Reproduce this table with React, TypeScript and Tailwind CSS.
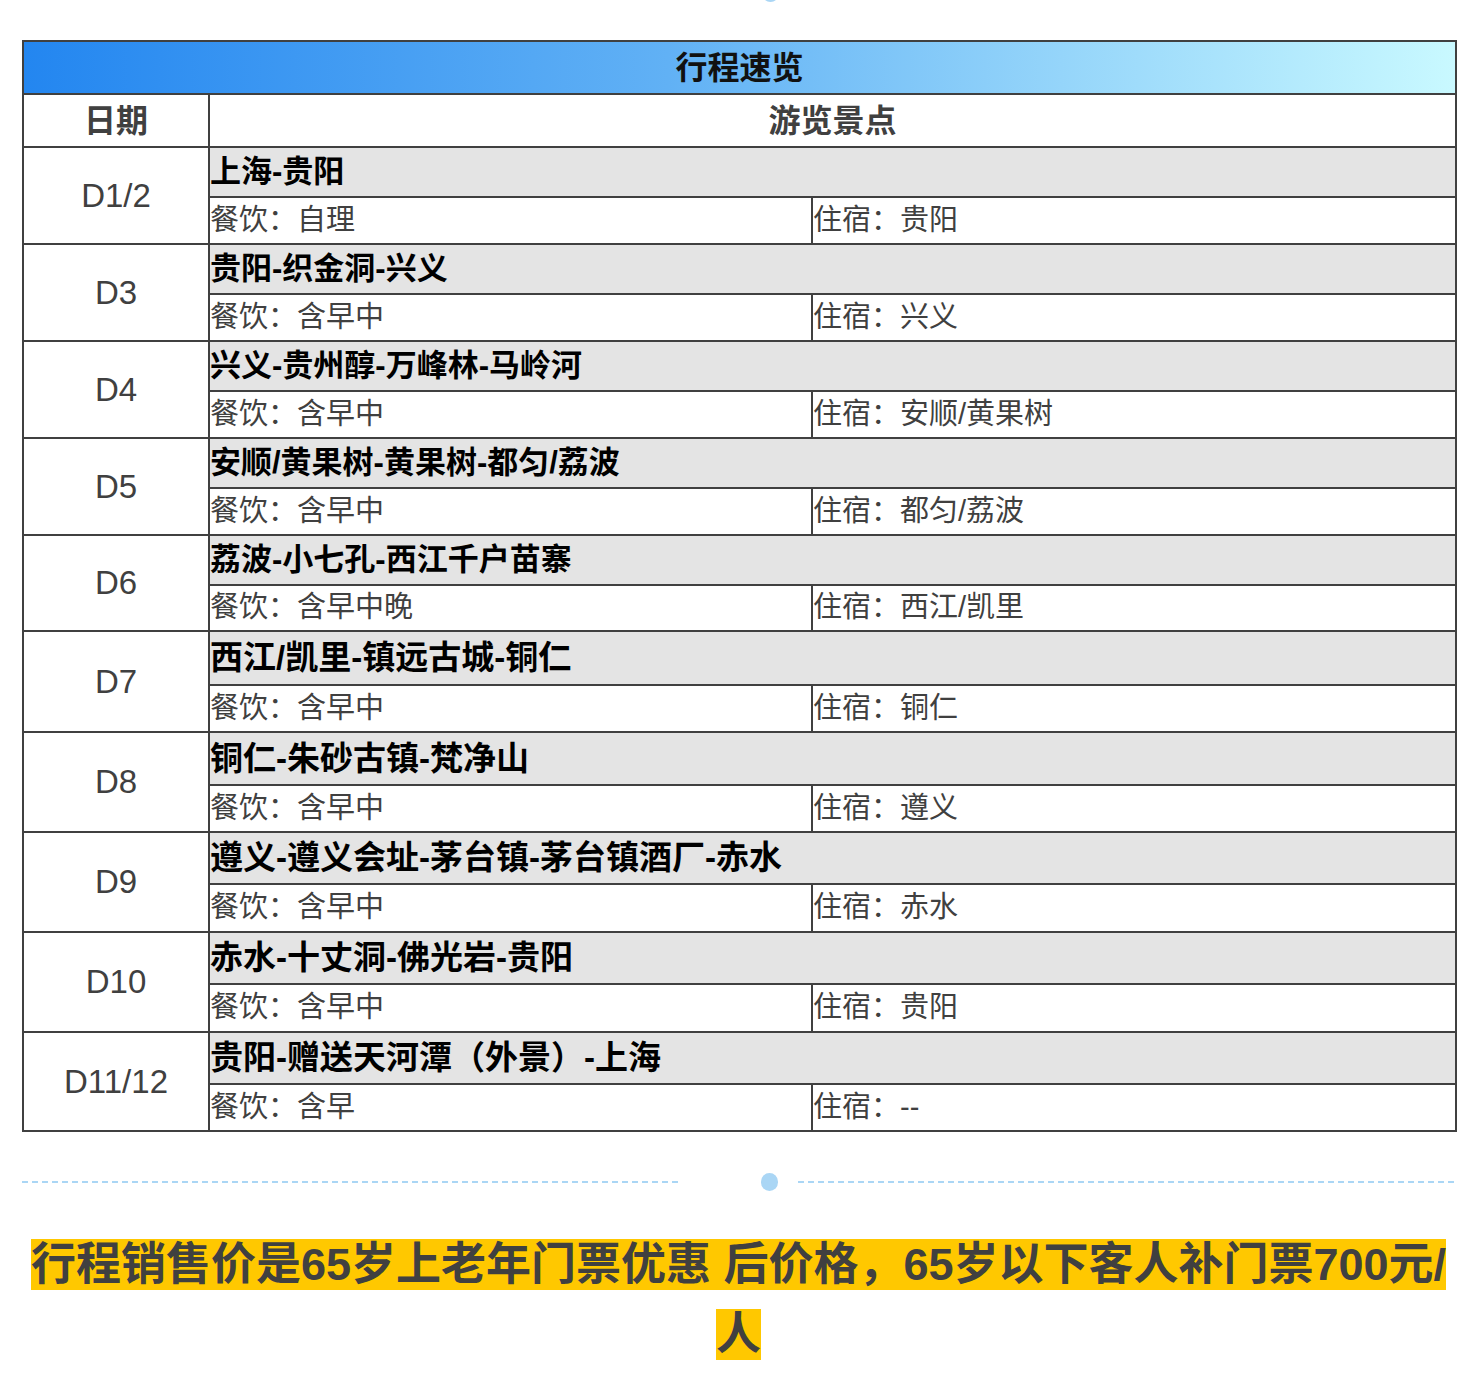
import React from 'react';

type Day = {
  day: string;
  route: string;
  meal: string;
  stay: string;
  titleH: string;
  detailH: string;
  titleSize: string;
};

// 行程数据（后半段标题字号略大）
const days: Day[] = [
  { day: 'D1/2', route: '上海-贵阳', meal: '自理', stay: '贵阳', titleH: 'h-[50px]', detailH: 'h-[47px]', titleSize: 'text-[31px]' },
  { day: 'D3', route: '贵阳-织金洞-兴义', meal: '含早中', stay: '兴义', titleH: 'h-[50px]', detailH: 'h-[47px]', titleSize: 'text-[31px]' },
  { day: 'D4', route: '兴义-贵州醇-万峰林-马岭河', meal: '含早中', stay: '安顺/黄果树', titleH: 'h-[50px]', detailH: 'h-[47px]', titleSize: 'text-[31px]' },
  { day: 'D5', route: '安顺/黄果树-黄果树-都匀/荔波', meal: '含早中', stay: '都匀/荔波', titleH: 'h-[50px]', detailH: 'h-[47px]', titleSize: 'text-[31px]' },
  { day: 'D6', route: '荔波-小七孔-西江千户苗寨', meal: '含早中晚', stay: '西江/凯里', titleH: 'h-[50px]', detailH: 'h-[46px]', titleSize: 'text-[31px]' },
  { day: 'D7', route: '西江/凯里-镇远古城-铜仁', meal: '含早中', stay: '铜仁', titleH: 'h-[54px]', detailH: 'h-[47px]', titleSize: 'text-[33px]' },
  { day: 'D8', route: '铜仁-朱砂古镇-梵净山', meal: '含早中', stay: '遵义', titleH: 'h-[53px]', detailH: 'h-[47px]', titleSize: 'text-[33px]' },
  { day: 'D9', route: '遵义-遵义会址-茅台镇-茅台镇酒厂-赤水', meal: '含早中', stay: '赤水', titleH: 'h-[52px]', detailH: 'h-[48px]', titleSize: 'text-[33px]' },
  { day: 'D10', route: '赤水-十丈洞-佛光岩-贵阳', meal: '含早中', stay: '贵阳', titleH: 'h-[52px]', detailH: 'h-[48px]', titleSize: 'text-[33px]' },
  { day: 'D11/12', route: '贵阳-赠送天河潭（外景）-上海', meal: '含早', stay: '--', titleH: 'h-[52px]', detailH: 'h-[47px]', titleSize: 'text-[33px]' },
];

const cell = 'border-2 border-[#404040] p-0';

function Divider() {
  return (
    <div className="flex items-center px-[22px]">
      <div className="h-[2px] flex-1 bg-[repeating-linear-gradient(90deg,#aad6f5_0_6px,transparent_6px_10px)]" />
      <div className="ml-[82px] mr-[20px] h-[18px] w-[17px] rounded-full bg-[#aad6f5]" />
      <div className="h-[2px] flex-1 bg-[repeating-linear-gradient(90deg,#aad6f5_0_6px,transparent_6px_10px)]" />
    </div>
  );
}

export default function App() {
  return (
    <div className="w-[1477px] min-h-[1379px] bg-white font-['Liberation_Sans','Noto_Sans_CJK_SC',sans-serif]">
      {/* 上一段分隔线的圆点尾巴 */}
      <div className="h-[2px] overflow-hidden pl-[762px]">
        <div className="-mt-[16px] h-[18px] w-[17px] rounded-full bg-[#aad6f5]" />
      </div>

      <div className="mt-[38px] pl-[22px]">
        <table className="w-[1433px] table-fixed border-collapse">
          <colgroup>
            <col className="w-[186px]" />
            <col className="w-[603px]" />
            <col className="w-[644px]" />
          </colgroup>
          <tbody>
            <tr>
              <td
                colSpan={3}
                className={`${cell} h-[53px] bg-[linear-gradient(90deg,#2386f0_0%,#61b1f5_45%,#c9f9ff_100%)] text-center text-[32px] font-bold text-[#111]`}
              >
                行程速览
              </td>
            </tr>
            <tr>
              <td className={`${cell} h-[53px] text-center text-[32px] font-bold text-[#404040]`}>日期</td>
              <td colSpan={2} className={`${cell} text-center text-[32px] font-bold text-[#404040]`}>
                游览景点
              </td>
            </tr>
            {days.map((d) => (
              <React.Fragment key={d.day}>
                <tr>
                  <td rowSpan={2} className={`${cell} text-center text-[33px] text-[#404040]`}>
                    {d.day}
                  </td>
                  <td colSpan={2} className={`${cell} ${d.titleH} ${d.titleSize} bg-[#e4e4e4] font-bold text-black`}>
                    {d.route}
                  </td>
                </tr>
                <tr>
                  <td className={`${cell} ${d.detailH} text-[29px] text-[#404040]`}>餐饮：{d.meal}</td>
                  <td className={`${cell} text-[29px] text-[#404040]`}>住宿：{d.stay}</td>
                </tr>
              </React.Fragment>
            ))}
          </tbody>
        </table>
      </div>

      <div className="mt-[41px]">
        <Divider />
      </div>

      <div className="mt-[39px] px-[22px] text-center text-[45px] font-bold leading-[70px] text-[#404040]">
        <span className="bg-[#ffc800]">
          行程销售价是65岁上老年门票优惠 后价格，65岁以下客人补门票700元/人
        </span>
      </div>
    </div>
  );
}
